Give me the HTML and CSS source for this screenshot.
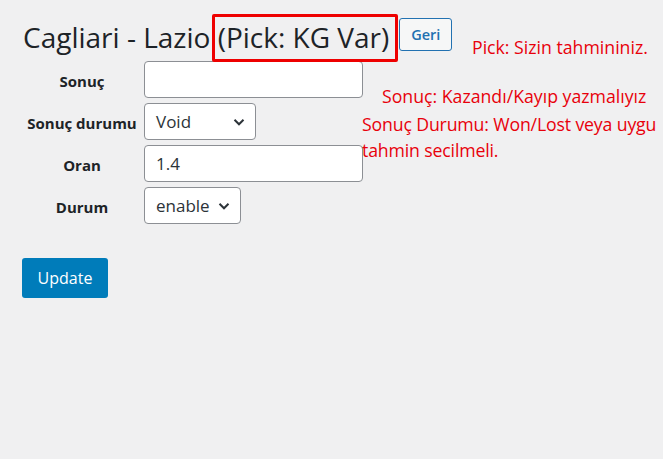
FILE: index.html
```html
<!DOCTYPE html>
<html lang="tr">
<head>
<meta charset="utf-8">
<title>Cagliari - Lazio</title>
<link rel="stylesheet" href="styles.css">
</head>
<body>
<div class="wrap">
  <div class="head">
    <h1 class="title">Cagliari - Lazio <span class="pick">(Pick: KG Var)</span></h1>
    <a class="btn-geri" href="#">Geri</a>
  </div>
  <form class="form">
    <div class="label">Sonuç</div>
    <div class="field"><div class="input wide"></div></div>
    <div class="label">Sonuç durumu</div>
    <div class="field"><div class="select void"><span>Void</span><svg class="chev" width="14" height="14" viewBox="0 0 14 14"><path d="M2.5 4.8 L7 9.3 L11.5 4.8" fill="none" stroke="#2c3338" stroke-width="2"/></svg></div></div>
    <div class="label">Oran</div>
    <div class="field"><div class="input wide">1.4</div></div>
    <div class="label">Durum</div>
    <div class="field"><div class="select enable"><span>enable</span><svg class="chev" width="14" height="14" viewBox="0 0 14 14"><path d="M2.5 4.8 L7 9.3 L11.5 4.8" fill="none" stroke="#2c3338" stroke-width="2"/></svg></div></div>
  </form>
  <button class="btn-update" type="button">Update</button>

  <div class="note note-pick">Pick: Sizin tahmininiz.</div>
  <div class="note note-sonuc">Sonuç: Kazandı/Kayıp yazmalıyız</div>
  <div class="note note-durum">Sonuç Durumu: Won/Lost veya uygu<br>tahmin secilmeli.</div>
</div>
</body>
</html>
```
FILE: styles.css
```css
html, body {
  margin: 0;
  padding: 0;
  background: #f0f0f1;
  width: 663px;
  height: 459px;
  overflow: hidden;
}
body {
  font-family: "Open Sans", "Noto Sans", sans-serif;
  color: #1d2327;
}
.wrap {
  position: relative;
  padding: 18px 0 0 23px;
  height: 441px;
}
.head {
  display: flex;
  align-items: flex-start;
  gap: 10px;
}
.title {
  margin: 0;
  font-weight: 400;
  font-size: 28px;
  line-height: 38px;
  color: #1d2327;
  white-space: nowrap;
}
.pick {
  position: relative;
}
.pick::after {
  content: "";
  position: absolute;
  left: -6px;
  right: -9px;
  top: -4px;
  bottom: -6px;
  border: 3px solid #ee0000;
  border-radius: 2px;
}
.btn-geri {
  display: inline-flex;
  align-items: center;
  justify-content: center;
  box-sizing: border-box;
  width: 53px;
  height: 33px;
  border: 1px solid #2271b1;
  border-radius: 3px;
  background: #f6f7f7;
  color: #2271b1;
  font-size: 14.5px;
  font-weight: 600;
  text-decoration: none;
}
.form {
  display: grid;
  grid-template-columns: 118px auto;
  column-gap: 3px;
  row-gap: 5px;
  margin-top: 5px;
  align-items: center;
  justify-items: start;
}
.label {
  justify-self: center;
  font-weight: 700;
  font-size: 15px;
  color: #1d2327;
  padding-top: 2px;
}
.input, .select {
  box-sizing: border-box;
  height: 37px;
  border: 1px solid #8c8f94;
  border-radius: 4px;
  background: #fff;
  font-size: 17px;
  color: #2c3338;
  display: flex;
  align-items: center;
}
.input.wide {
  width: 219px;
  padding-left: 11px;
}
.select {
  justify-content: space-between;
  padding: 0 9px 0 11px;
}
.select.void { width: 112px; }
.select.enable { width: 97px; }
.chev { flex: none; }
.btn-update {
  display: block;
  margin-top: 34px;
  margin-left: -1px;
  box-sizing: border-box;
  width: 86px;
  height: 40px;
  border: none;
  border-radius: 3px;
  background: #007cba;
  color: #fff;
  font-family: inherit;
  font-size: 16px;
}
.note {
  position: absolute;
  color: #e8000b;
  font-size: 17.7px;
  line-height: 26px;
  white-space: nowrap;
}
.note-pick { left: 472px; top: 34px; }
.note-sonuc { left: 382px; top: 83px; }
.note-durum { left: 362px; top: 111px; letter-spacing: -0.15px; }
```
